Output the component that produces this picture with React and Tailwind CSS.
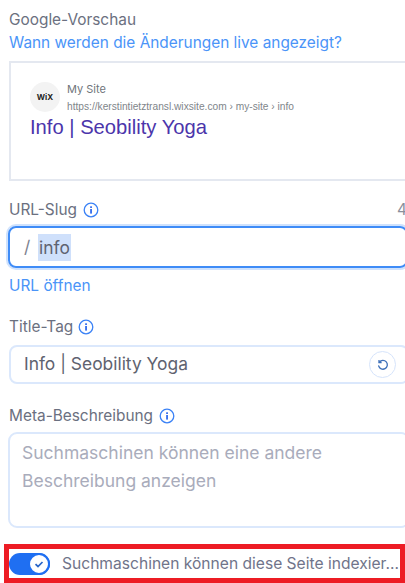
export default function App() {
  const Info = () => (
    <svg width="16" height="16" viewBox="0 0 16 16" fill="none" className="shrink-0">
      <circle cx="8" cy="8" r="6.8" stroke="#3b82f6" strokeWidth="1.3" />
      <rect x="7.2" y="7" width="1.7" height="4.6" fill="#2563eb" />
      <rect x="7.2" y="4.3" width="1.7" height="1.7" fill="#2563eb" />
    </svg>
  );
  return (
    <div className="w-[405px] h-[583px] overflow-hidden bg-white font-['Inter',sans-serif] text-[15.4px] text-[#6b7080]">
      <div className="w-[420px] pl-[9px] pt-[10px] flex flex-col">
        <div className="h-[22px] leading-[20px]">Google-Vorschau</div>
        <div className="h-[22px] leading-[22px] text-[#4a94f8]">Wann werden die Änderungen live angezeigt?</div>
        <div className="mt-[7px] h-[120px] border-2 border-[#e4e8f0] pl-[19px] pt-[19px]">
          <div className="flex gap-[7px] items-start">
            <div className="w-[30px] h-[30px] rounded-full bg-[#f3f3f3] flex items-center justify-center text-[8px] font-bold text-[#222]">WiX</div>
            <div className="flex flex-col">
              <span className="text-[11px] leading-[14px] text-[#70757a]">My Site</span>
              <span className="text-[10.2px] leading-[12px] mt-[5px] text-[#80858a] font-['Liberation_Sans',sans-serif]">https://kerstintietztransl.wixsite.com › my-site › info</span>
            </div>
          </div>
          <div className="text-[20.2px] leading-[24px] mt-[2px] text-[#4b35ab] font-['Liberation_Sans',sans-serif]">Info | Seobility Yoga</div>
        </div>

        <div className="mt-[18px] h-[22px] flex items-center gap-[6px]">
          <span>URL-Slug</span>
          <Info />
          <span className="ml-auto mr-[13px] text-[#8a8f9c]">4</span>
        </div>
        <div className="mt-[5px] h-[42px] w-[400px] -ml-[1px] border-2 border-[#3f8cf7] rounded-[8px] shadow-[0_0_0_2px_#cfe2fd] flex items-center pl-[14px] text-[17.4px] text-[#5f6370]">
          <span className="text-[#7d8290] w-[14px]">/</span>
          <span className="bg-[#cfe0fb] h-[27px] leading-[27px] px-[1px]">info</span>
        </div>
        <div className="mt-[8px] h-[20px] leading-[20px] text-[#4a94f8]">URL öffnen</div>

        <div className="mt-[20px] h-[22px] flex items-center gap-[5px]">
          <span>Title-Tag</span>
          <Info />
        </div>
        <div className="mt-[7px] h-[39px] w-[400px] border-2 border-[#dbe8fc] rounded-[8px] flex items-center justify-between pl-[13px] pr-[11px] text-[17.4px] text-[#5f6370]">
          <span>Info | Seobility Yoga</span>
          <div className="w-[27px] h-[27px] rounded-full border border-[#d6e4fb] flex items-center justify-center">
            <svg width="14" height="14" viewBox="0 0 14 14" fill="none">
              <path d="M3.4 4.2A4.4 4.4 0 1 1 2.7 8" stroke="#3d6fb8" strokeWidth="1.3" strokeLinecap="round" />
              <path d="M3 1.9v2.6h2.6" stroke="#3d6fb8" strokeWidth="1.3" />
            </svg>
          </div>
        </div>

        <div className="mt-[21px] h-[22px] flex items-center gap-[6px]">
          <span>Meta-Beschreibung</span>
          <Info />
        </div>
        <div className="mt-[5px] h-[96px] w-[402px] -ml-[1px] border-2 border-[#dbe8fc] rounded-[9px] pl-[12px] pt-[5px] leading-[28px] text-[17.5px] text-[#a9acbb]">
          Suchmaschinen können eine andere<br />Beschreibung anzeigen
        </div>
      </div>
      <div className="mt-[16px] ml-[4px] w-[401px] h-[39px] border-[5px] border-[#ed1c24] flex items-center gap-[12px] text-[15.6px] text-[#70748a]">
        <div className="relative w-[41px] h-[22px] shrink-0 rounded-full bg-[#1f6ff2]">
          <div className="absolute right-0 top-0 w-[22px] h-[22px] rounded-full bg-white border-2 border-[#1f6ff2] flex items-center justify-center">
            <svg width="12" height="12" viewBox="0 0 12 12" fill="none">
              <path d="M2.5 6.2 5 8.5 9.5 4" stroke="#2a66c8" strokeWidth="1.7" />
            </svg>
          </div>
        </div>
        <span className="whitespace-nowrap overflow-hidden">Suchmaschinen können diese Seite indexier…</span>
      </div>
    </div>
  );
}
